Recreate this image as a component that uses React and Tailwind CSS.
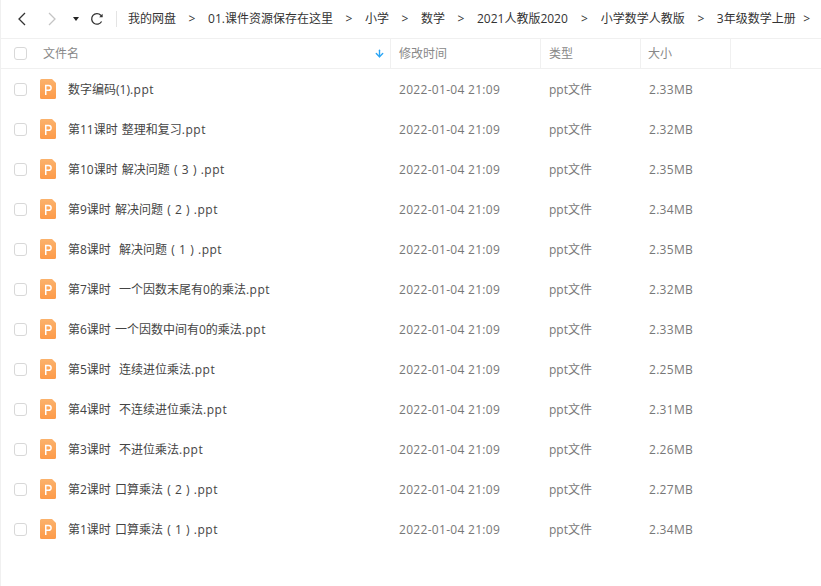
import { ArrowDown } from 'lucide-react';

const crumbs = ['我的网盘', '01.课件资源保存在这里', '小学', '数学', '2021人教版2020', '小学数学人教版', '3年级数学上册'];

const files = [
  ['数字编码(1)', '2.33MB'],
  ['第11课时 整理和复习', '2.32MB'],
  ['第10课时 解决问题（3）', '2.35MB'],
  ['第9课时 解决问题（2）', '2.34MB'],
  ['第8课时  解决问题（1）', '2.35MB'],
  ['第7课时  一个因数末尾有0的乘法', '2.32MB'],
  ['第6课时 一个因数中间有0的乘法', '2.33MB'],
  ['第5课时  连续进位乘法', '2.25MB'],
  ['第4课时  不连续进位乘法', '2.31MB'],
  ['第3课时  不进位乘法', '2.26MB'],
  ['第2课时 口算乘法（2）', '2.27MB'],
  ['第1课时 口算乘法（1）', '2.34MB'],
];

function PptIcon() {
  return (
    <svg width="16" height="20" viewBox="0 0 16 20" className="shrink-0">
      <defs>
        <linearGradient id="ppt" x1="0" y1="0" x2="0" y2="1">
          <stop offset="0" stopColor="#fbb26c" />
          <stop offset="1" stopColor="#fd9a48" />
        </linearGradient>
      </defs>
      <path d="M1.5 0H12L16 4V18.5A1.5 1.5 0 0 1 14.5 20H1.5A1.5 1.5 0 0 1 0 18.5V1.5A1.5 1.5 0 0 1 1.5 0Z" fill="url(#ppt)" />
      <path d="M5.75 16V6.5H8.7A2.4 2.4 0 0 1 8.7 11.3H5.75" fill="none" stroke="#fff" strokeWidth="1.5" />
    </svg>
  );
}

function Checkbox() {
  return <div className="w-[13px] h-[13px] rounded-[3px] border border-[#d8d8d8] bg-white shrink-0" />;
}

// the brackets in the original are drawn centred in a full-width cell
function FileName({ name }) {
  const parts = name.split(/([（）])/);
  return (
    <span className="ml-[12px] pt-[2px] text-[#444] whitespace-pre [word-spacing:1px]">
      {parts.map((p, i) => {
        if (p === '（') return <span key={i} className="inline-block w-[12px] text-center">(</span>;
        if (p === '）') return <span key={i} className="inline-block w-[12px] text-center">)</span>;
        return <span key={i}>{p}</span>;
      })}
      <span className="tracking-[0.5px]">.ppt</span>
    </span>
  );
}

export default function App() {
  return (
    <div className="w-[821px] h-[586px] overflow-hidden bg-white border-l border-[#f0f0f0] text-[12px] font-['Open_Sans','Noto_Sans_CJK_SC',sans-serif]">
      <div className="flex items-center h-[39px] border-b border-[#f0f0f0] whitespace-nowrap overflow-hidden">
        <svg width="12" height="14" viewBox="0 0 12 14" fill="none" stroke="#333" strokeWidth="1.3" className="ml-[15px] shrink-0">
          <path d="M9 1L3 7L9 13" />
        </svg>
        <svg width="12" height="14" viewBox="0 0 12 14" fill="none" stroke="#c4c4c4" strokeWidth="1.3" className="ml-[18px] shrink-0">
          <path d="M3 1L9 7L3 13" />
        </svg>
        <div className="ml-[15px] w-0 h-0 border-x-[3px] border-x-transparent border-t-[4px] border-t-[#222] shrink-0" />
        <svg width="14" height="14" viewBox="0 0 14 14" fill="none" stroke="#333" strokeWidth="1.3" className="ml-[11px] shrink-0">
          <path d="M11.6 9.5A5.3 5.3 0 1 1 10.8 3.2L12 4.6" />
          <path d="M12.6 1.8V5.2H9.2" fill="#333" stroke="none" />
        </svg>
        <div className="ml-[12px] w-px h-[16px] bg-[#e4e4e4] shrink-0" />
        <div className="flex items-center ml-[11px] text-[#333]">
          {crumbs.map((c, i) => (
            <span key={c} className="flex items-center">
              {i > 0 && <span className={`${i === 5 ? 'w-[33px]' : 'w-[32px]'} text-center text-[#333] shrink-0`}>&gt;</span>}
              {c}
            </span>
          ))}
          <span className="w-[22px] text-center shrink-0">&gt;</span>
        </div>
      </div>

      <div className="flex h-[30px] border-b border-[#f0f0f0] text-[#888]">
        <div className="flex items-center w-[390px] pl-[13px] pr-[5px] border-r border-[#f0f0f0]">
          <Checkbox />
          <span className="ml-[16px] flex-1">文件名</span>
          <ArrowDown size={11} strokeWidth={3} className="text-[#2aa5f5]" />
        </div>
        <div className="flex items-center w-[150px] pl-[8px] border-r border-[#f0f0f0]">修改时间</div>
        <div className="flex items-center w-[100px] pl-[8px] border-r border-[#f0f0f0]">类型</div>
        <div className="flex items-center w-[90px] pl-[7px] border-r border-[#f0f0f0]">大小</div>
      </div>

      {files.map(([name, size]) => (
        <div key={name} className="flex items-center h-[40px] text-[#777]">
          <div className="flex items-center w-[390px] pl-[13px]">
            <Checkbox />
            <div className="ml-[13px]"><PptIcon /></div>
            <FileName name={name} />
          </div>
          <div className="w-[150px] pl-[8px] pt-[2px] whitespace-nowrap tracking-[0.3px]">2022-01-04 21:09</div>
          <div className="w-[100px] pl-[8px] pt-[2px]">ppt文件</div>
          <div className="w-[90px] pl-[8px] pt-[2px] tracking-[0.3px]">{size}</div>
        </div>
      ))}
    </div>
  );
}
